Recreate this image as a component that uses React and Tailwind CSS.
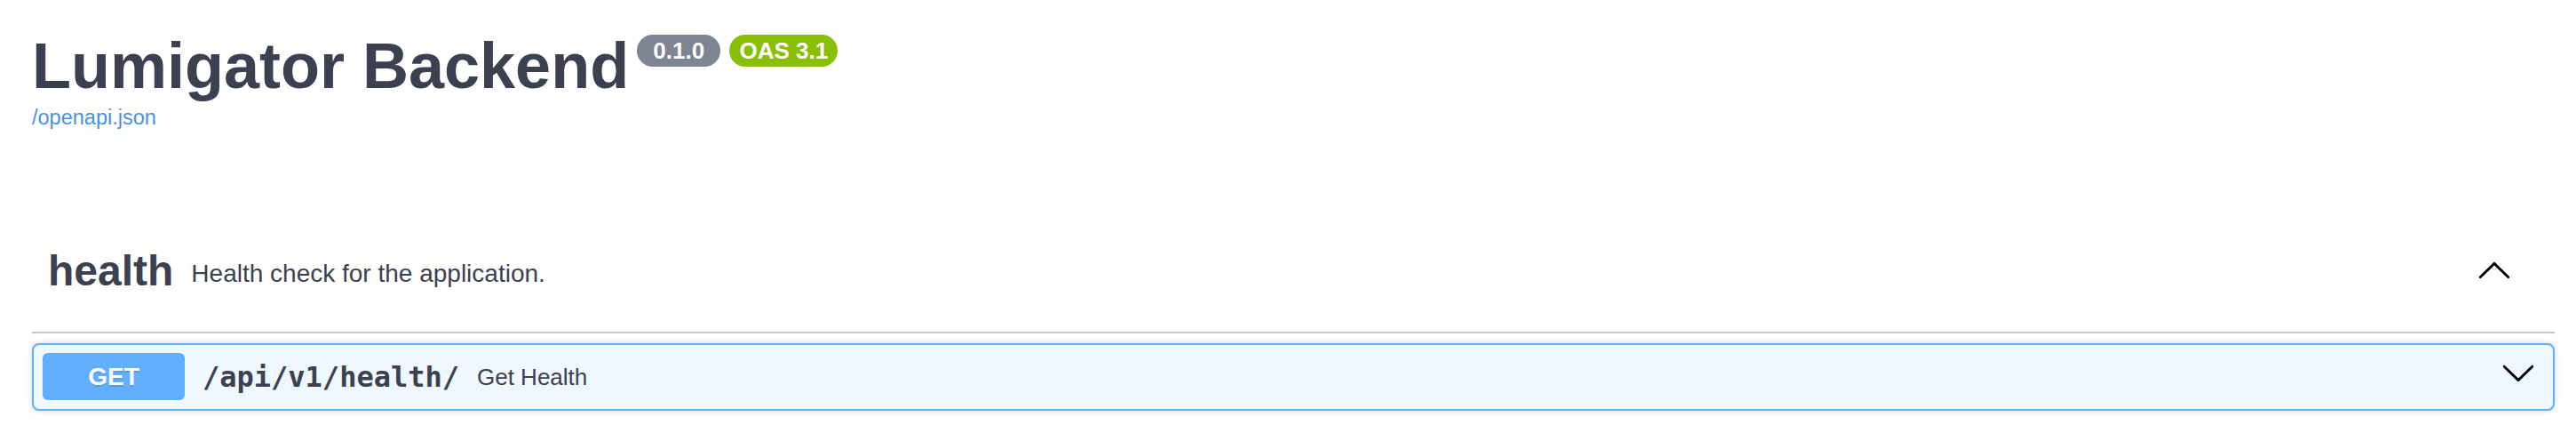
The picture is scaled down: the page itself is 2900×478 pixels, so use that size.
const ArrowDown = ({ className }) => (
  <svg viewBox="0 0 20 20" width="40" height="40" className={className} aria-hidden="true">
    <path
      fill="#000"
      d="M17.418 6.109c.272-.268.709-.268.979 0s.271.701 0 .969l-7.908 7.83c-.27.268-.707.268-.979 0l-7.908-7.83c-.27-.268-.27-.701 0-.969.271-.268.709-.268.979 0L10 13.25l7.418-7.141z"
    />
  </svg>
);

const Badge = ({ children, color }) => (
  <span
    className={`${color} rounded-full px-[11px] py-[5px] text-[26px] leading-none font-bold text-white whitespace-pre`}
  >
    {children}
  </span>
);

export default function App() {
  return (
    <div className="h-[478px] w-full overflow-hidden bg-white pl-[36px] pr-[24px] pt-[38px] font-['Liberation_Sans',Arial,sans-serif] text-[#3b4151]">
      {/* info */}
      <div className="flex items-start">
        <h1 className="text-[72px] leading-none font-bold">Lumigator Backend</h1>
        <div className="ml-[9px] mt-[1px] flex gap-[10px]">
          <Badge color="bg-[#7d8492]">{' 0.1.0 '}</Badge>
          <Badge color="bg-[#89bf04]">OAS 3.1</Badge>
        </div>
      </div>
      <a className="mt-[11px] block text-[23.5px] leading-none text-[#4990e2]">/openapi.json</a>

      {/* tag */}
      <div className="mt-[116.5px] flex items-center border-b-2 border-[#c4c6cb] pl-[18px] pr-[48px] pt-[20px] pb-[44px]">
        <h3 className="text-[48px] leading-none font-bold">health</h3>
        <span className="mt-[6px] flex-1 px-[20px] text-[28px] leading-none">
          Health check for the application.
        </span>
        <ArrowDown className="rotate-180" />
      </div>

      {/* operation */}
      <div className="mt-[11px] rounded-[8px] border-2 border-[#61affe] bg-[#eff7ff] shadow-[0_0_6px_rgba(0,0,0,0.19)]">
        <div className="flex items-center pl-[10px] pr-[19px] pt-[9px] pb-[10px]">
          <span className="flex h-[53px] w-[160px] items-center justify-center rounded-[6px] bg-[#61affe] text-[28px] font-bold text-white [text-shadow:0_2px_0_rgba(0,0,0,0.1)]">
            GET
          </span>
          <span className="px-[20px] font-['DejaVu_Sans_Mono',monospace] text-[32px] leading-none font-bold">
            /api/v1/health/
          </span>
          <span className="flex-1 text-[26px] leading-none">Get Health</span>
          <ArrowDown className="mb-[10px]" />
        </div>
      </div>
    </div>
  );
}
